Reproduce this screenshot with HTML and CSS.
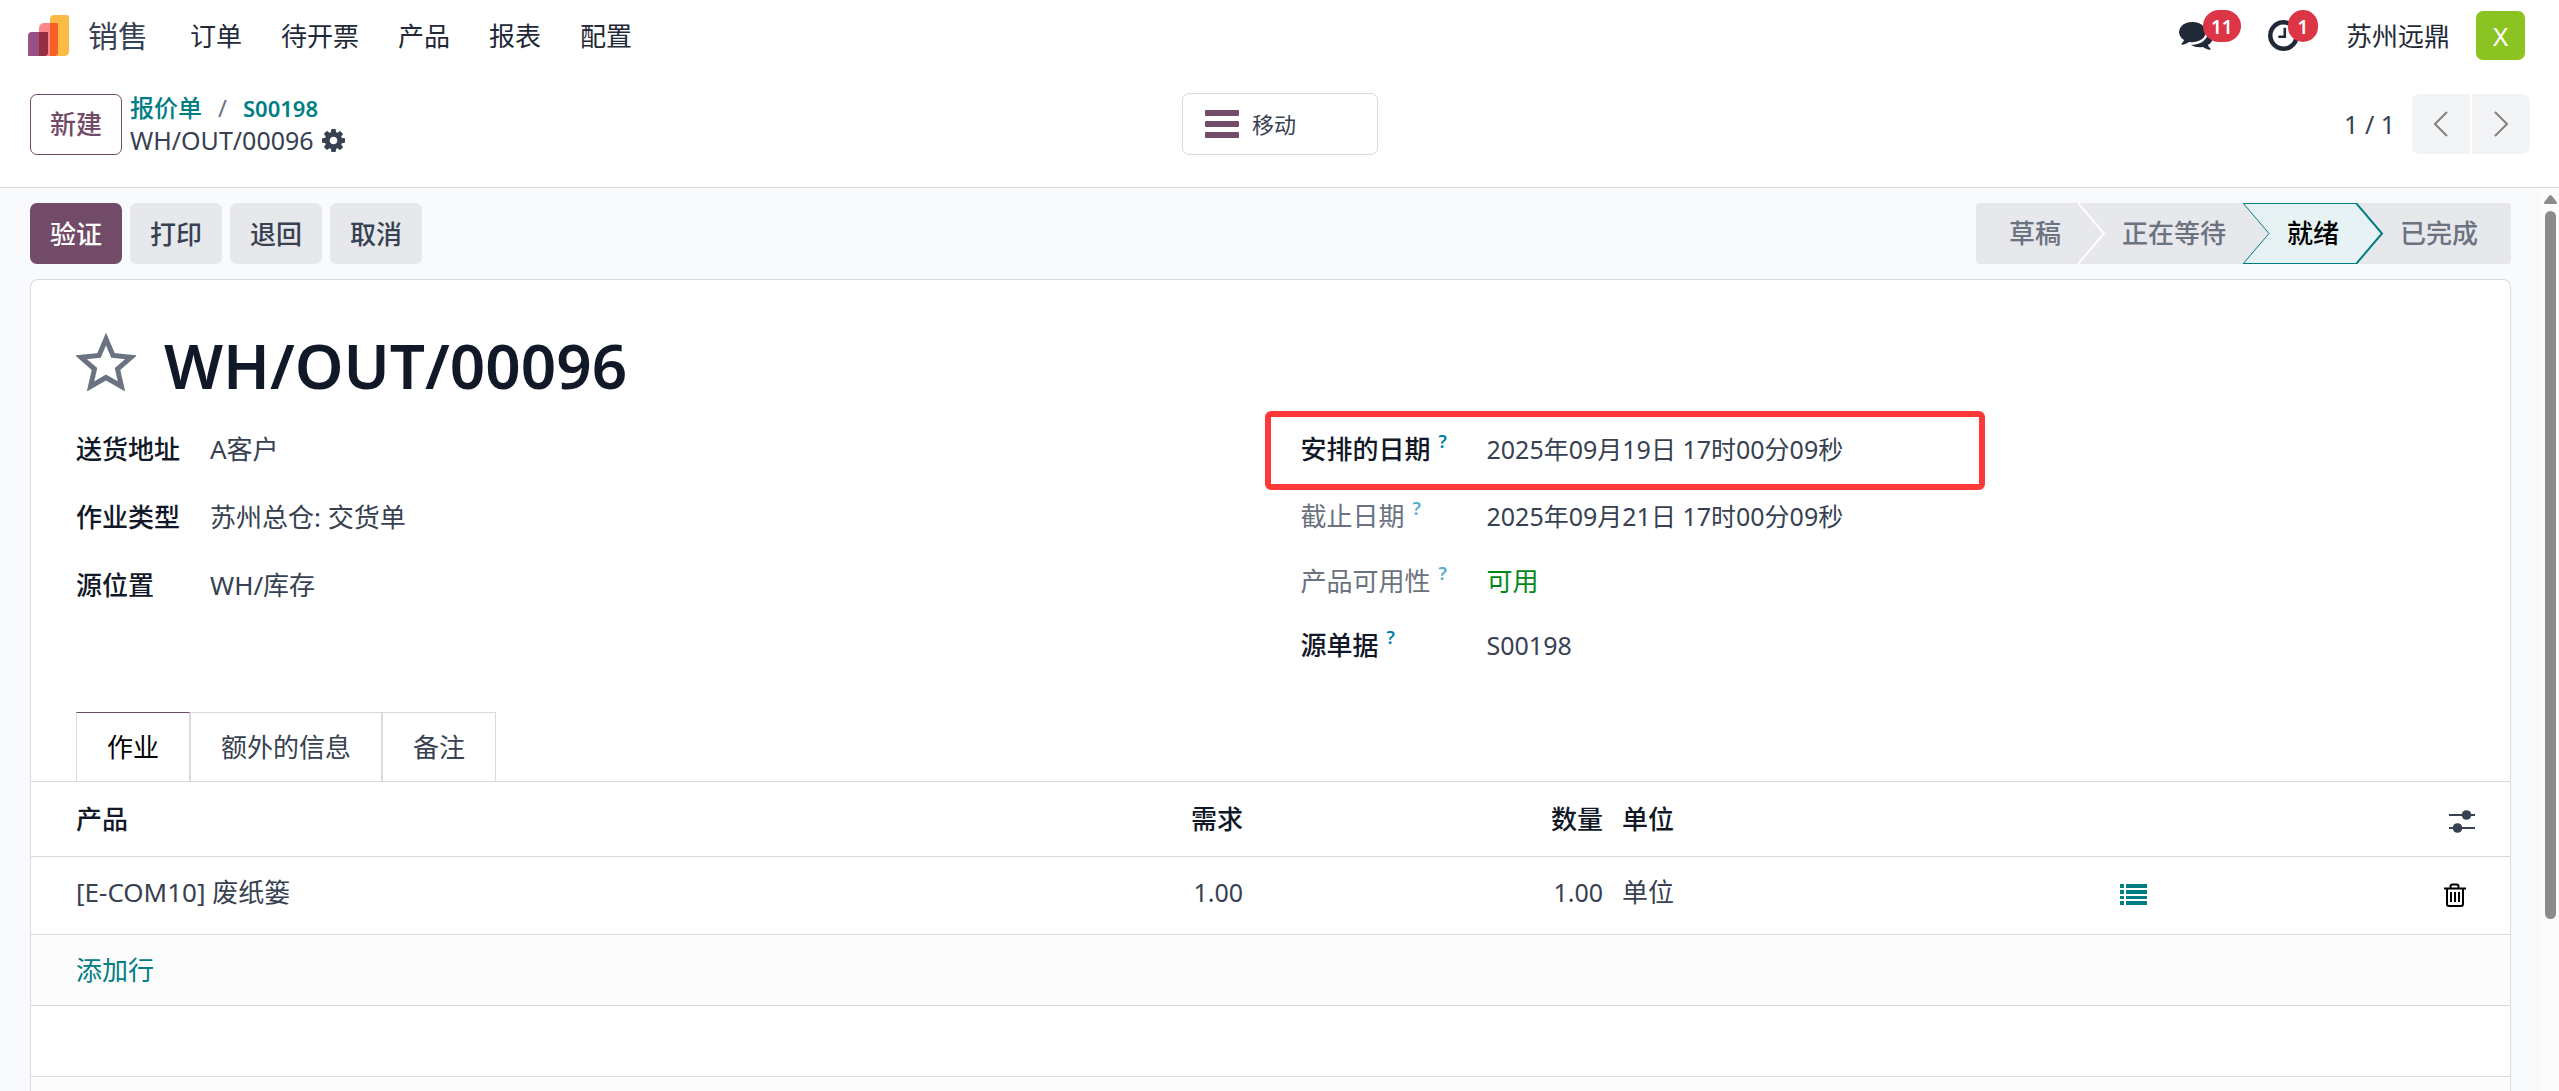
FILE: index.html
```html
<!DOCTYPE html>
<html lang="zh-CN">
<head>
<meta charset="utf-8">
<title>WH/OUT/00096</title>
<link rel="stylesheet" href="styles.css">
</head>
<body>
<header class="top">
  <nav class="navbar">
    <a class="brand" href="#">
      <svg width="42" height="42" viewBox="0 0 42 42" aria-hidden="true">
        <path d="M22 4a4 4 0 0 1 4-4h12a3 3 0 0 1 3 3v34a5 5 0 0 1-5 4H22z" fill="#fbb945"/>
        <path d="M11 13a5 5 0 0 1 5-5h14v29a4 4 0 0 1-4 4H11z" fill="#fc868b"/>
        <path d="M22 8h8v29a4 4 0 0 1-4 4h-4z" fill="#f86126"/>
        <path d="M0 21a4 4 0 0 1 4-4h16v20a4 4 0 0 1-4 4H0z" fill="#985184"/>
        <path d="M11 17h9v20a4 4 0 0 1-4 4h-5z" fill="#953042"/>
      </svg>
      <span>销售</span>
    </a>
    <ul class="menu">
      <li><a href="#">订单</a></li>
      <li><a href="#">待开票</a></li>
      <li><a href="#">产品</a></li>
      <li><a href="#">报表</a></li>
      <li><a href="#">配置</a></li>
    </ul>
    <div class="systray">
      <button class="tray chat" type="button" aria-label="消息">
        <svg width="34" height="28" viewBox="0 256 1792 1420" preserveAspectRatio="none" fill="currentColor"><path d="M1408 768q0 139-94 257t-256.500 186.500-353.500 68.500q-86 0-176-16-124 88-278 128-36 9-86 16h-3q-11 0-20.500-8t-11.500-21q-1-3-1-6.500t.5-6.500 2-6l2.500-5 3.500-5.500 4-5 4.500-5 4-4.500q5-6 23-25t26-29.500 22.500-29 25-38.500 20.500-44q-124-72-195-177t-71-224q0-139 94-257t256.500-186.500 353.500-68.500 353.500 68.500 256.500 186.500 94 257zm384 256q0 120-71 224.500t-195 176.500q10 24 20.500 44t25 38.500 22.500 29 26 29.500 23 25q1 1 4 4.500t4.500 5 4 5 3.500 5.500l2.500 5 2 6 .5 6.500-1 6.500q-3 14-13 22t-22 7q-50-7-86-16-154-40-278-128-90 16-176 16-271 0-472-132 58 4 88 4 161 0 309-45t264-129q125-92 192-212t67-254q0-77-23-152 129 71 204 178t75 230z"/></svg>
        <span class="badge">11</span>
      </button>
      <button class="tray" type="button" aria-label="活动">
        <svg width="31" height="31" viewBox="128 128 1536 1536" fill="currentColor"><path d="M1024 544v448q0 14-9 23t-23 9h-320q-14 0-23-9t-9-23v-64q0-14 9-23t23-9h224v-352q0-14 9-23t23-9h64q14 0 23 9t9 23zm416 352q0-148-73-273t-198-198-273-73-273 73-198 198-73 273 73 273 198 198 273 73 273-73 198-198 73-273zm224 0q0 209-103 385.500t-279.500 279.500-385.500 103-385.500-103-279.500-279.500-103-385.500 103-385.500 279.500-279.500 385.500-103 385.500 103 279.500 279.500 103 385.500z"/></svg>
        <span class="badge">1</span>
      </button>
      <a class="company" href="#">苏州远鼎</a>
      <button class="avatar" type="button">X</button>
    </div>
  </nav>

  <div class="control">
    <div class="control-left">
      <button class="btn btn-outline" type="button">新建</button>
      <div class="crumbs">
        <div class="crumb-path"><a href="#">报价单</a><span class="slash">/</span><a class="latin" href="#">S00198</a></div>
        <div class="crumb-current"><span>WH/OUT/00096</span>
          <button class="icon-btn" type="button" aria-label="操作"><svg width="23" height="23" viewBox="128 128 1536 1536" fill="currentColor"><path d="M1152 896q0-106-75-181t-181-75-181 75-75 181 75 181 181 75 181-75 75-181zm512-109v222q0 12-8 23t-20 13l-185 28q-19 54-39 91 35 50 107 138 10 12 10 25t-9 23q-27 37-99 108t-94 71q-12 0-26-9l-138-108q-44 23-91 38-16 136-29 186-7 28-36 28h-222q-14 0-24.500-8.500t-11.500-21.500l-28-184q-49-16-90-37l-141 107q-10 9-25 9-14 0-25-11-126-114-165-168-7-10-7-23 0-12 8-23 15-21 51-66.500t54-70.500q-27-50-41-99l-183-27q-13-2-21-12.500t-8-23.500v-222q0-12 8-23t19-13l186-28q14-46 39-92-40-57-107-138-10-12-10-24 0-10 9-23 26-36 98.500-107.500t94.500-71.500q13 0 26 10l138 107q44-23 91-38 16-136 29-186 7-28 36-28h222q14 0 24.500 8.500t11.500 21.500l28 184q49 16 90 37l142-107q9-9 24-9 13 0 25 10 129 119 165 170 7 8 7 22 0 12-8 23-15 21-51 66.500t-54 70.500q26 50 41 98l183 28q13 2 21 12.500t8 23.500z"/></svg></button>
        </div>
      </div>
    </div>
    <button class="stat" type="button">
      <svg width="34" height="28" viewBox="0 0 34 28" fill="#714b67" aria-hidden="true"><rect width="34" height="6" rx="1"/><rect y="11" width="34" height="6" rx="1"/><rect y="22" width="34" height="6" rx="1"/></svg>
      <span>移动</span>
    </button>
    <div class="pager">
      <span>1 / 1</span>
      <div class="pager-buttons">
        <button type="button" aria-label="上一页"><svg width="16" height="26" viewBox="0 0 16 26"><path d="M14 1 2 13l12 12"/></svg></button>
        <button type="button" aria-label="下一页"><svg width="16" height="26" viewBox="0 0 16 26"><path d="M2 1l12 12L2 25"/></svg></button>
      </div>
    </div>
  </div>
</header>

<div class="body">
  <main class="form">
    <div class="statusbar">
      <div class="actions">
        <button class="btn btn-primary" type="button">验证</button>
        <button class="btn" type="button">打印</button>
        <button class="btn" type="button">退回</button>
        <button class="btn" type="button">取消</button>
      </div>
      <ol class="steps">
        <li class="step">草稿<svg class="tip" viewBox="0 0 28 61"><path d="M0 0l26 30.500L0 61" fill="#e7e8eb" stroke="#fff" stroke-width="2"/></svg></li>
        <li class="step">正在等待<svg class="tip" viewBox="0 0 28 61"><path d="M0 0l26 30.500L0 61" fill="#e7e8eb" stroke="#017e84"/></svg></li>
        <li class="step current" aria-current="step">就绪<svg class="tip" viewBox="0 0 28 61"><path d="M0 0l26 30.500L0 61" fill="#e6f2f3" stroke="#017e84" stroke-width="2"/></svg></li>
        <li class="step">已完成</li>
      </ol>
    </div>

    <section class="sheet">
      <div class="title">
        <button class="icon-btn star" type="button" aria-label="收藏"><svg width="60" height="58" viewBox="0 0 60 58"><path d="M30 6l7 16.500 18 1.800-13.500 11.700 4 17.500L30 44.500 14.500 53.500l4-17.500L5 24.300l18-1.800z" fill="none" stroke="#6b7280" stroke-width="5"/></svg></button>
        <h1>WH/OUT/00096</h1>
      </div>

      <div class="groups">
        <dl class="fields">
          <dt>送货地址</dt><dd>A客户</dd>
          <dt>作业类型</dt><dd>苏州总仓: 交货单</dd>
          <dt>源位置</dt><dd>WH/库存</dd>
        </dl>
        <dl class="fields fields-dates">
          <dt>安排的日期<sup>?</sup></dt><dd>2025年09月19日 17时00分09秒</dd>
          <dt class="muted">截止日期<sup>?</sup></dt><dd>2025年09月21日 17时00分09秒</dd>
          <dt class="muted">产品可用性<sup>?</sup></dt><dd class="ok">可用</dd>
          <dt>源单据<sup>?</sup></dt><dd>S00198</dd>
          <div class="highlight"></div>
        </dl>
      </div>

      <div class="tabs" role="tablist">
        <button class="tab active" role="tab" aria-selected="true" type="button">作业</button>
        <button class="tab" role="tab" type="button">额外的信息</button>
        <button class="tab" role="tab" type="button">备注</button>
      </div>

      <table class="lines">
        <colgroup><col><col class="c-num"><col class="c-num"><col class="c-unit"><col class="c-detail"><col class="c-action"></colgroup>
        <thead>
          <tr><th>产品</th><th class="num">需求</th><th class="num">数量</th><th class="unit">单位</th><th></th>
            <th class="act"><button class="icon-btn" type="button" aria-label="可选列"><svg width="28" height="24" viewBox="0 0 28 24" fill="#374151"><path d="M1 4h26v2H1zM1 17h26v2H1z"/><circle cx="18.500" cy="5" r="4.800"/><circle cx="9.500" cy="18" r="4.800"/></svg></button></th></tr>
        </thead>
        <tbody>
          <tr class="line"><td>[E-COM10] 废纸篓</td><td class="num">1.00</td><td class="num">1.00</td><td class="unit">单位</td>
            <td class="detail"><button class="icon-btn" type="button" aria-label="详细作业"><svg width="27" height="21" viewBox="0 0 27 21" fill="#017e84"><path d="M0 0h4v4H0zM6 0h21v4H6zM0 6h4v4H0zM6 6h21v4H6zM0 12h4v3H0zM6 12h21v3H6zM0 17h4v4H0zM6 17h21v4H6z"/></svg></button></td>
            <td class="act"><button class="icon-btn" type="button" aria-label="删除"><svg width="22" height="24" viewBox="0 0 22 24" fill="none" stroke="#000" stroke-width="2"><path d="M0 5.500h22M6.500 5V3.500a2 2 0 0 1 2-2h4a2 2 0 0 1 2 2V5M3 5.500V21a2 2 0 0 0 2 2h12a2 2 0 0 0 2-2V5.500M7 9v10M11 9v10M15 9v10"/></svg></button></td></tr>
          <tr class="shade"><td colspan="6"><a href="#">添加行</a></td></tr>
          <tr><td colspan="6"></td></tr>
          <tr class="shade"><td colspan="6"></td></tr>
        </tbody>
      </table>
    </section>
  </main>
  <div class="scrollbar" aria-hidden="true">
    <svg width="13" height="9" viewBox="0 0 13 9"><path d="M6.500 0C7.500 0 13 7 13 8s-.5 1-1 1H1C.5 9 0 9 0 8s5.500-8 6.500-8z" fill="#8b8b8b"/></svg>
    <div class="thumb"></div>
  </div>
</div>
</body>
</html>
```
FILE: styles.css
```css
* { box-sizing: border-box; }

body {
  margin: 0;
  height: 100vh;
  display: flex;
  flex-direction: column;
  overflow: hidden;
  background: #fff;
  color: #374151;
  font: 26px/36px "Noto Sans", "Noto Sans CJK SC", sans-serif;
}

a { color: inherit; text-decoration: none; }
button { font: inherit; color: inherit; border: 0; background: none; padding: 0; cursor: pointer; }
svg { display: block; }
ul, ol, dl, dd, h1 { margin: 0; padding: 0; list-style: none; }
.icon-btn { display: inline-flex; vertical-align: middle; }

/* Top bar */
.top { border-bottom: 1px solid #d8dadd; padding: 0 28px; }
.navbar { display: flex; align-items: center; height: 71px; color: #1f2937; }
.brand { display: flex; align-items: center; gap: 18px; font-size: 30px; color: #374151; }
.menu { display: flex; gap: 39px; margin-left: 42px; }
.systray { margin-left: auto; display: flex; align-items: center; padding-right: 6px; }
.tray { position: relative; margin-right: 47px; }
.tray.chat { margin-right: 55px; }
.badge {
  position: absolute;
  left: 20px;
  top: -10px;
  min-width: 30px;
  height: 32px;
  padding: 0 8px;
  border-radius: 16px;
  background: #dc3545;
  color: #fff;
  font-size: 19px;
  line-height: 34px;
  font-weight: 600;
}
.tray.chat .badge { left: 24px; top: -12px; }
.avatar { width: 49px; height: 49px; margin-left: 26px; border-radius: 7px; background: #8bc322; color: #fff; }

/* Control panel */
.control {
  display: grid;
  grid-template-columns: 1fr auto 1fr;
  align-items: center;
  padding: 21px 1px 31px 2px;
}
.control-left { display: flex; align-items: center; gap: 8px; }
.btn {
  height: 61px;
  padding: 0 20px;
  border-radius: 7px;
  background: #e7e8eb;
  color: #374151;
  font-weight: 500;
}
.btn-primary { background: #714b67; color: #fff; }
.btn-outline { background: #fff; border: 1px solid #714b67; padding: 0 19px; color: #714b67; }
.crumbs { font-size: 24px; line-height: 32px; }
.crumb-path { color: #017e84; font-weight: 500; }
.crumb-path .slash { margin: 0 16px; color: #6b7280; font-weight: 400; }
.crumb-path .latin { font-size: 22px; font-weight: 600; }
.crumb-current { display: flex; align-items: center; gap: 8px; font-size: 25px; }
.stat {
  display: flex;
  align-items: center;
  gap: 13px;
  width: 196px;
  height: 62px;
  padding: 0 22px;
  border: 1px solid #d8dadd;
  border-radius: 7px;
  font-size: 22px;
}
.pager { display: flex; align-items: center; justify-content: flex-end; gap: 17px; font-size: 25px; }
.pager-buttons { display: flex; gap: 2px; }
.pager-buttons button { display: grid; place-items: center; width: 58px; height: 60px; background: #f3f4f6; }
.pager-buttons button:first-child { border-radius: 7px 0 0 7px; }
.pager-buttons button:last-child { border-radius: 0 7px 7px 0; }
.pager-buttons path { fill: none; stroke: #808080; stroke-width: 2; }

/* Form area */
.body { flex: 1; min-height: 0; display: flex; }
.form { flex: 1; min-width: 0; overflow: hidden; padding: 15px 30px 0; background: #f9fafb; }
.statusbar { display: flex; justify-content: space-between; margin-bottom: 15px; }
.actions { display: flex; gap: 8px; }
.steps { display: flex; background: #e7e8eb; border-radius: 4px; line-height: 61px; font-weight: 500; color: #6b7280; }
.step { position: relative; padding: 0 17px 0 44px; }
.step:first-child { padding-left: 33px; }
.step:last-child { padding-right: 33px; }
.step.current { background: #e6f2f3; color: #000; box-shadow: inset 0 1px #017e84, inset 0 -1px #017e84; }
.tip { position: absolute; left: 100%; top: 0; width: 28px; height: 61px; z-index: 1; }

.scrollbar { width: 18px; display: flex; flex-direction: column; align-items: center; gap: 7px; padding-top: 7px; background: #fcfcfc; }
.thumb { width: 11px; height: 79%; border-radius: 6px; background: #8b8b8b; }

/* Sheet */
.sheet { height: 100%; background: #fff; border: 1px solid #d8dadd; border-bottom: 0; border-radius: 8px 8px 0 0; }
.title { display: flex; align-items: center; gap: 28px; height: 80px; margin: 45px 45px 10px; }
.title h1 { font: 600 62px/80px "Noto Sans", sans-serif; color: #111827; }
.star { margin-bottom: 6px; }
.groups { display: grid; grid-template-columns: 1fr 1fr; gap: 60px; padding: 0 45px; }
.fields { display: grid; grid-template-columns: 134px 1fr; grid-auto-rows: 68px; align-items: center; align-content: start; }
.fields-dates { position: relative; grid-template-columns: 186px 1fr; grid-template-rows: 68px 66px 64px 64px; }
.fields dt { font-weight: 500; color: #111827; }
.fields-dates dd { font-size: 25px; }
.fields .muted { color: #6b7280; font-weight: 400; }
.fields .ok { color: #008818; font-size: 26px; }
.fields sup { margin-left: 8px; font-size: 18px; line-height: 18px; font-weight: 600; color: #0180a5; vertical-align: 11px; }
.fields .muted sup { color: #55b0c8; }
.highlight {
  position: absolute;
  left: -36px;
  top: -4px;
  width: 720px;
  height: 79px;
  border: 6px solid #ff3939;
  border-radius: 6px;
}

/* Tabs */
.tabs { display: flex; padding: 0 45px; margin-top: 35px; }
.tab { height: 69px; padding: 0 30px; border: 1px solid #d8dadd; border-bottom: 0; }
.tab.active { border-top-color: #714b67; color: #000; }

/* Operation lines */
.lines { width: 100%; table-layout: fixed; border-collapse: collapse; }
.c-num { width: 360px; }
.c-unit { width: 498px; }
.c-detail { width: 290px; }
.c-action { width: 110px; }
.lines th, .lines td { height: 71px; padding: 0 0 0 45px; text-align: left; border-top: 1px solid #d8dadd; }
.lines th { height: 75px; color: #111827; font-weight: 500; }
.lines .line td { height: 78px; padding-bottom: 8px; }
.lines .num { text-align: right; padding-right: 9px; padding-left: 0; }
.lines .line .num { font-size: 25px; }
.lines .unit, .lines .detail { padding-left: 10px; }
.lines th.act { padding-left: 48px; }
.lines td.act { padding-left: 44px; }
.lines .shade { background: #fcfcfc; }
.lines a { color: #017e84; }
```
